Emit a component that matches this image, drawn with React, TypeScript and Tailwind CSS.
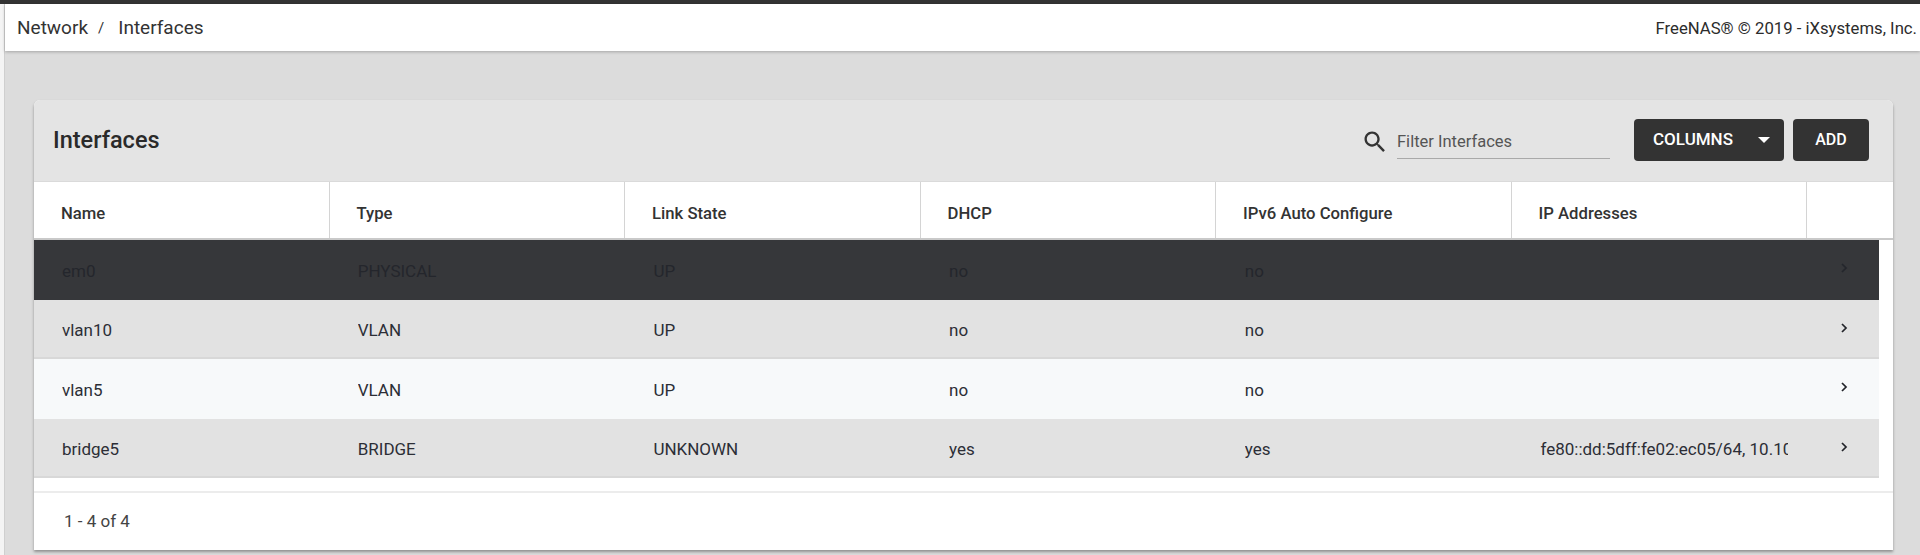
const columns = ["Name", "Type", "Link State", "DHCP", "IPv6 Auto Configure", "IP Addresses"];

const rows = [
  { cells: ["em0", "PHYSICAL", "UP", "no", "no", ""], bg: "bg-[#36373a]", border: "border-[#36373a]", text: "text-[#24262c]", icon: "text-[#24262c]" },
  { cells: ["vlan10", "VLAN", "UP", "no", "no", ""], bg: "bg-[#e2e2e2]", border: "border-[#d8d8d8]", text: "text-[#2c2e36]", icon: "text-[#22242a]" },
  { cells: ["vlan5", "VLAN", "UP", "no", "no", ""], bg: "bg-[#f7f9fa]", border: "border-[#f7f9fa]", text: "text-[#2c2e36]", icon: "text-[#22242a]" },
  { cells: ["bridge5", "BRIDGE", "UNKNOWN", "yes", "yes", "fe80::dd:5dff:fe02:ec05/64, 10.10.5.1/24"], bg: "bg-[#e2e2e2]", border: "border-[#d8d8d8]", text: "text-[#2c2e36]", icon: "text-[#22242a]" },
];

export default function App() {
  return (
    <div className="h-[555px] overflow-hidden flex flex-col bg-[#dcdcdc] font-['Roboto',sans-serif]">
      <div className="h-1 shrink-0 bg-[#333333]" />
      <div className="flex flex-1 min-h-0">
        <div className="w-[5px] shrink-0 bg-[#f4f4f4] border-r border-[#cfcfcf]" />
        <div className="flex-1 min-w-0 flex flex-col">
          {/* breadcrumb bar */}
          <div className="h-[47px] shrink-0 bg-white flex items-center justify-between pl-3 pr-[3px] pt-[2px] shadow-[0_1px_3px_rgba(0,0,0,0.25)]">
            <div className="flex items-center text-[19px] text-[#333333]">
              <span>Network</span>
              <span className="ml-[10px] text-[15px]">/</span>
              <span className="ml-[14px]">Interfaces</span>
            </div>
            <div className="text-[16.7px] text-[#2c2c2c]">FreeNAS® © 2019 - iXsystems, Inc.</div>
          </div>

          <div className="flex-1 min-h-0 pt-[49px] pl-[29px] pr-[27px]">
            <div className="h-[450px] rounded-t-[6px] bg-white flex flex-col shadow-[0_2px_3px_rgba(0,0,0,0.35)]">
              {/* card header */}
              <div className="h-[82px] shrink-0 rounded-t-[6px] bg-[#e4e4e4] flex items-center pl-[19px] pr-[24px] border-b border-[#dadada]">
                <h1 className="text-[23.5px] font-medium text-[#2a2a2a]">Interfaces</h1>
                <div className="ml-auto flex items-center">
                  <svg viewBox="0 0 24 24" className="mt-[2px] w-[28px] h-[28px] fill-[#333333]">
                    <path d="M15.5 14h-.79l-.28-.27C15.41 12.59 16 11.11 16 9.5 16 5.91 13.09 3 9.5 3S3 5.91 3 9.5 5.91 16 9.5 16c1.61 0 3.09-.59 4.23-1.57l.27.28v.79l5 4.99L20.49 19l-4.99-5zm-6 0C7.01 14 5 11.99 5 9.5S7.01 5 9.5 5 14 7.01 14 9.5 11.99 14 9.5 14z" />
                  </svg>
                  <div className="ml-[8px] w-[213px] h-[36px] pt-[4px] flex items-center border-b border-[#a9a9a9] text-[16.5px] text-[#555555]">
                    Filter Interfaces
                  </div>
                  <button className="ml-[24px] mb-[2px] w-[150px] h-[42px] rounded-[4px] bg-[#333333] text-white text-[17px] font-medium flex items-center pl-[19px]">
                    COLUMNS
                    <span className="ml-[25px] w-0 h-0 border-x-[6px] border-x-transparent border-t-[6px] border-t-white" />
                  </button>
                  <button className="ml-[9px] mb-[2px] w-[76px] h-[42px] rounded-[4px] bg-[#333333] text-white text-[16px] font-medium">
                    ADD
                  </button>
                </div>
              </div>

              {/* table header */}
              <div className="h-[58px] shrink-0 flex border-b-2 border-[#c9c9c9]">
                {columns.map((c) => (
                  <div key={c} className="w-[295.5px] shrink-0 pl-[27px] pt-[8px] flex items-center border-r border-[#d4d4d4] text-[16.7px] font-medium text-[#333333]">
                    {c}
                  </div>
                ))}
              </div>

              {/* rows */}
              <div className="pr-[14px]">
                {rows.map((r) => (
                  <div key={r.cells[0]} className={`h-[59.5px] flex items-center border-b-2 ${r.bg} ${r.border} ${r.text}`}>
                    {r.cells.map((cell, i) => (
                      <div key={i} className="w-[295.7px] shrink-0 pl-[28px] pr-[20px] pt-[5px] text-[17px]">
                        <div className="overflow-hidden whitespace-nowrap">{cell || "\u00a0"}</div>
                      </div>
                    ))}
                    <svg viewBox="0 0 24 24" className={`ml-[30px] -mt-[1px] w-[12px] h-[12px] fill-none stroke-current stroke-[3.5] ${r.icon}`}>
                      <path d="M8 4l8 8-8 8" />
                    </svg>
                  </div>
                ))}
              </div>

              {/* footer */}
              <div className="mt-[13px] flex-1 flex items-center pl-[30px] pt-[1px] border-t-2 border-[#ececec] text-[17px] text-[#444444]">
                1 - 4 of 4
              </div>
            </div>
          </div>
        </div>
      </div>
    </div>
  );
}
